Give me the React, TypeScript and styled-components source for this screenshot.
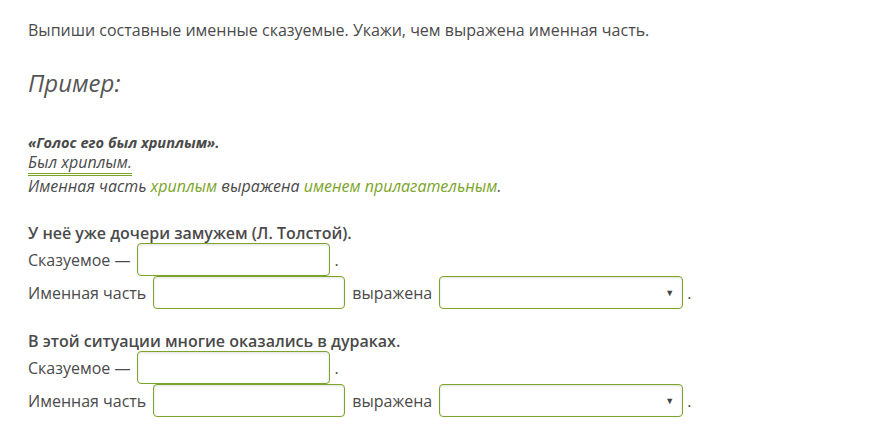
import styled, { createGlobalStyle } from 'styled-components';

const GlobalStyle = createGlobalStyle`
  body {
    margin: 0;
    background: #ffffff;
    font-family: 'Open Sans', 'Liberation Sans', sans-serif;
    color: #444444;
  }
`;

const green = '#7ba428';

// Page holds the whole exercise.
const Page = styled.div`
  padding: 19px 28px 0 28px;
  display: flex;
  flex-direction: column;
`;

const Instruction = styled.p`
  margin: 0;
  font-size: 16px;
  line-height: 22px;
  color: #4a4a4a;
`;

const ExampleTitle = styled.h2`
  margin: 25px 0 0 0;
  font-size: 24px;
  line-height: 34px;
  font-style: italic;
  font-weight: 400;
  color: #555555;
`;

const Example = styled.div`
  margin-top: 33px;
  display: flex;
  flex-direction: column;
  font-style: italic;
  font-size: 16px;
  line-height: 21px;
  color: #4a4a4a;
`;

const Quote = styled.span`
  font-weight: 700;
  font-size: 14.6px;
  line-height: 19px;
`;

const Underlined = styled.span`
  align-self: flex-start;
  border-bottom: 3px double ${green};
  line-height: 21px;
  padding-bottom: 0;
`;

const Accent = styled.span`
  color: ${green};
`;

const Task = styled.div<{ $gap: number }>`
  margin-top: ${(p) => p.$gap}px;
  display: flex;
  flex-direction: column;
  font-size: 16px;
  color: #4a4a4a;
`;

const TaskTitle = styled.div`
  font-weight: 600;
  font-size: 16px;
  line-height: 22px;
  margin-bottom: -1px;
`;

const Row = styled.div`
  display: flex;
  align-items: center;
  gap: 7px;
  height: 33px;
`;

const Field = styled.div<{ $width: number }>`
  width: ${(p) => p.$width}px;
  height: 33px;
  border: 1px solid ${green};
  border-radius: 4px;
  box-shadow: inset 0 1px 3px rgba(0, 0, 0, 0.12);
  background: #ffffff;
  display: flex;
  align-items: center;
  justify-content: flex-end;
  padding-right: 8px;
  box-sizing: border-box;
`;

const Arrow = styled.span`
  font-size: 9px;
  color: #444444;
`;

const Dot = styled.span`
  margin-left: -3px;
`;

const TaskBlock = ({ title, gap }: { title: string; gap: number }): JSX.Element => (
  <Task $gap={gap}>
    <TaskTitle>{title}</TaskTitle>
    <Row>
      <span>Сказуемое —</span>
      <Field $width={193} />
      <Dot>.</Dot>
    </Row>
    <Row>
      <span>Именная часть</span>
      <Field $width={192} />
      <span>выражена</span>
      <Field $width={244}>
        <Arrow>▼</Arrow>
      </Field>
      <Dot>.</Dot>
    </Row>
  </Task>
);

const App = (): JSX.Element => (
  <>
    <GlobalStyle />
    <Page>
      <Instruction>Выпиши составные именные сказуемые. Укажи, чем выражена именная часть.</Instruction>
      <ExampleTitle>Пример:</ExampleTitle>
      <Example>
        <Quote>«Голос его был хриплым».</Quote>
        <Underlined>Был хриплым.</Underlined>
        <span>
          Именная часть <Accent>хриплым</Accent> выражена <Accent>именем прилагательным</Accent>.
        </span>
      </Example>
      <TaskBlock title="У неё уже дочери замужем (Л. Толстой)." gap={25} />
      <TaskBlock title="В этой ситуации многие оказались в дураках." gap={21} />
    </Page>
  </>
);

export default App;
